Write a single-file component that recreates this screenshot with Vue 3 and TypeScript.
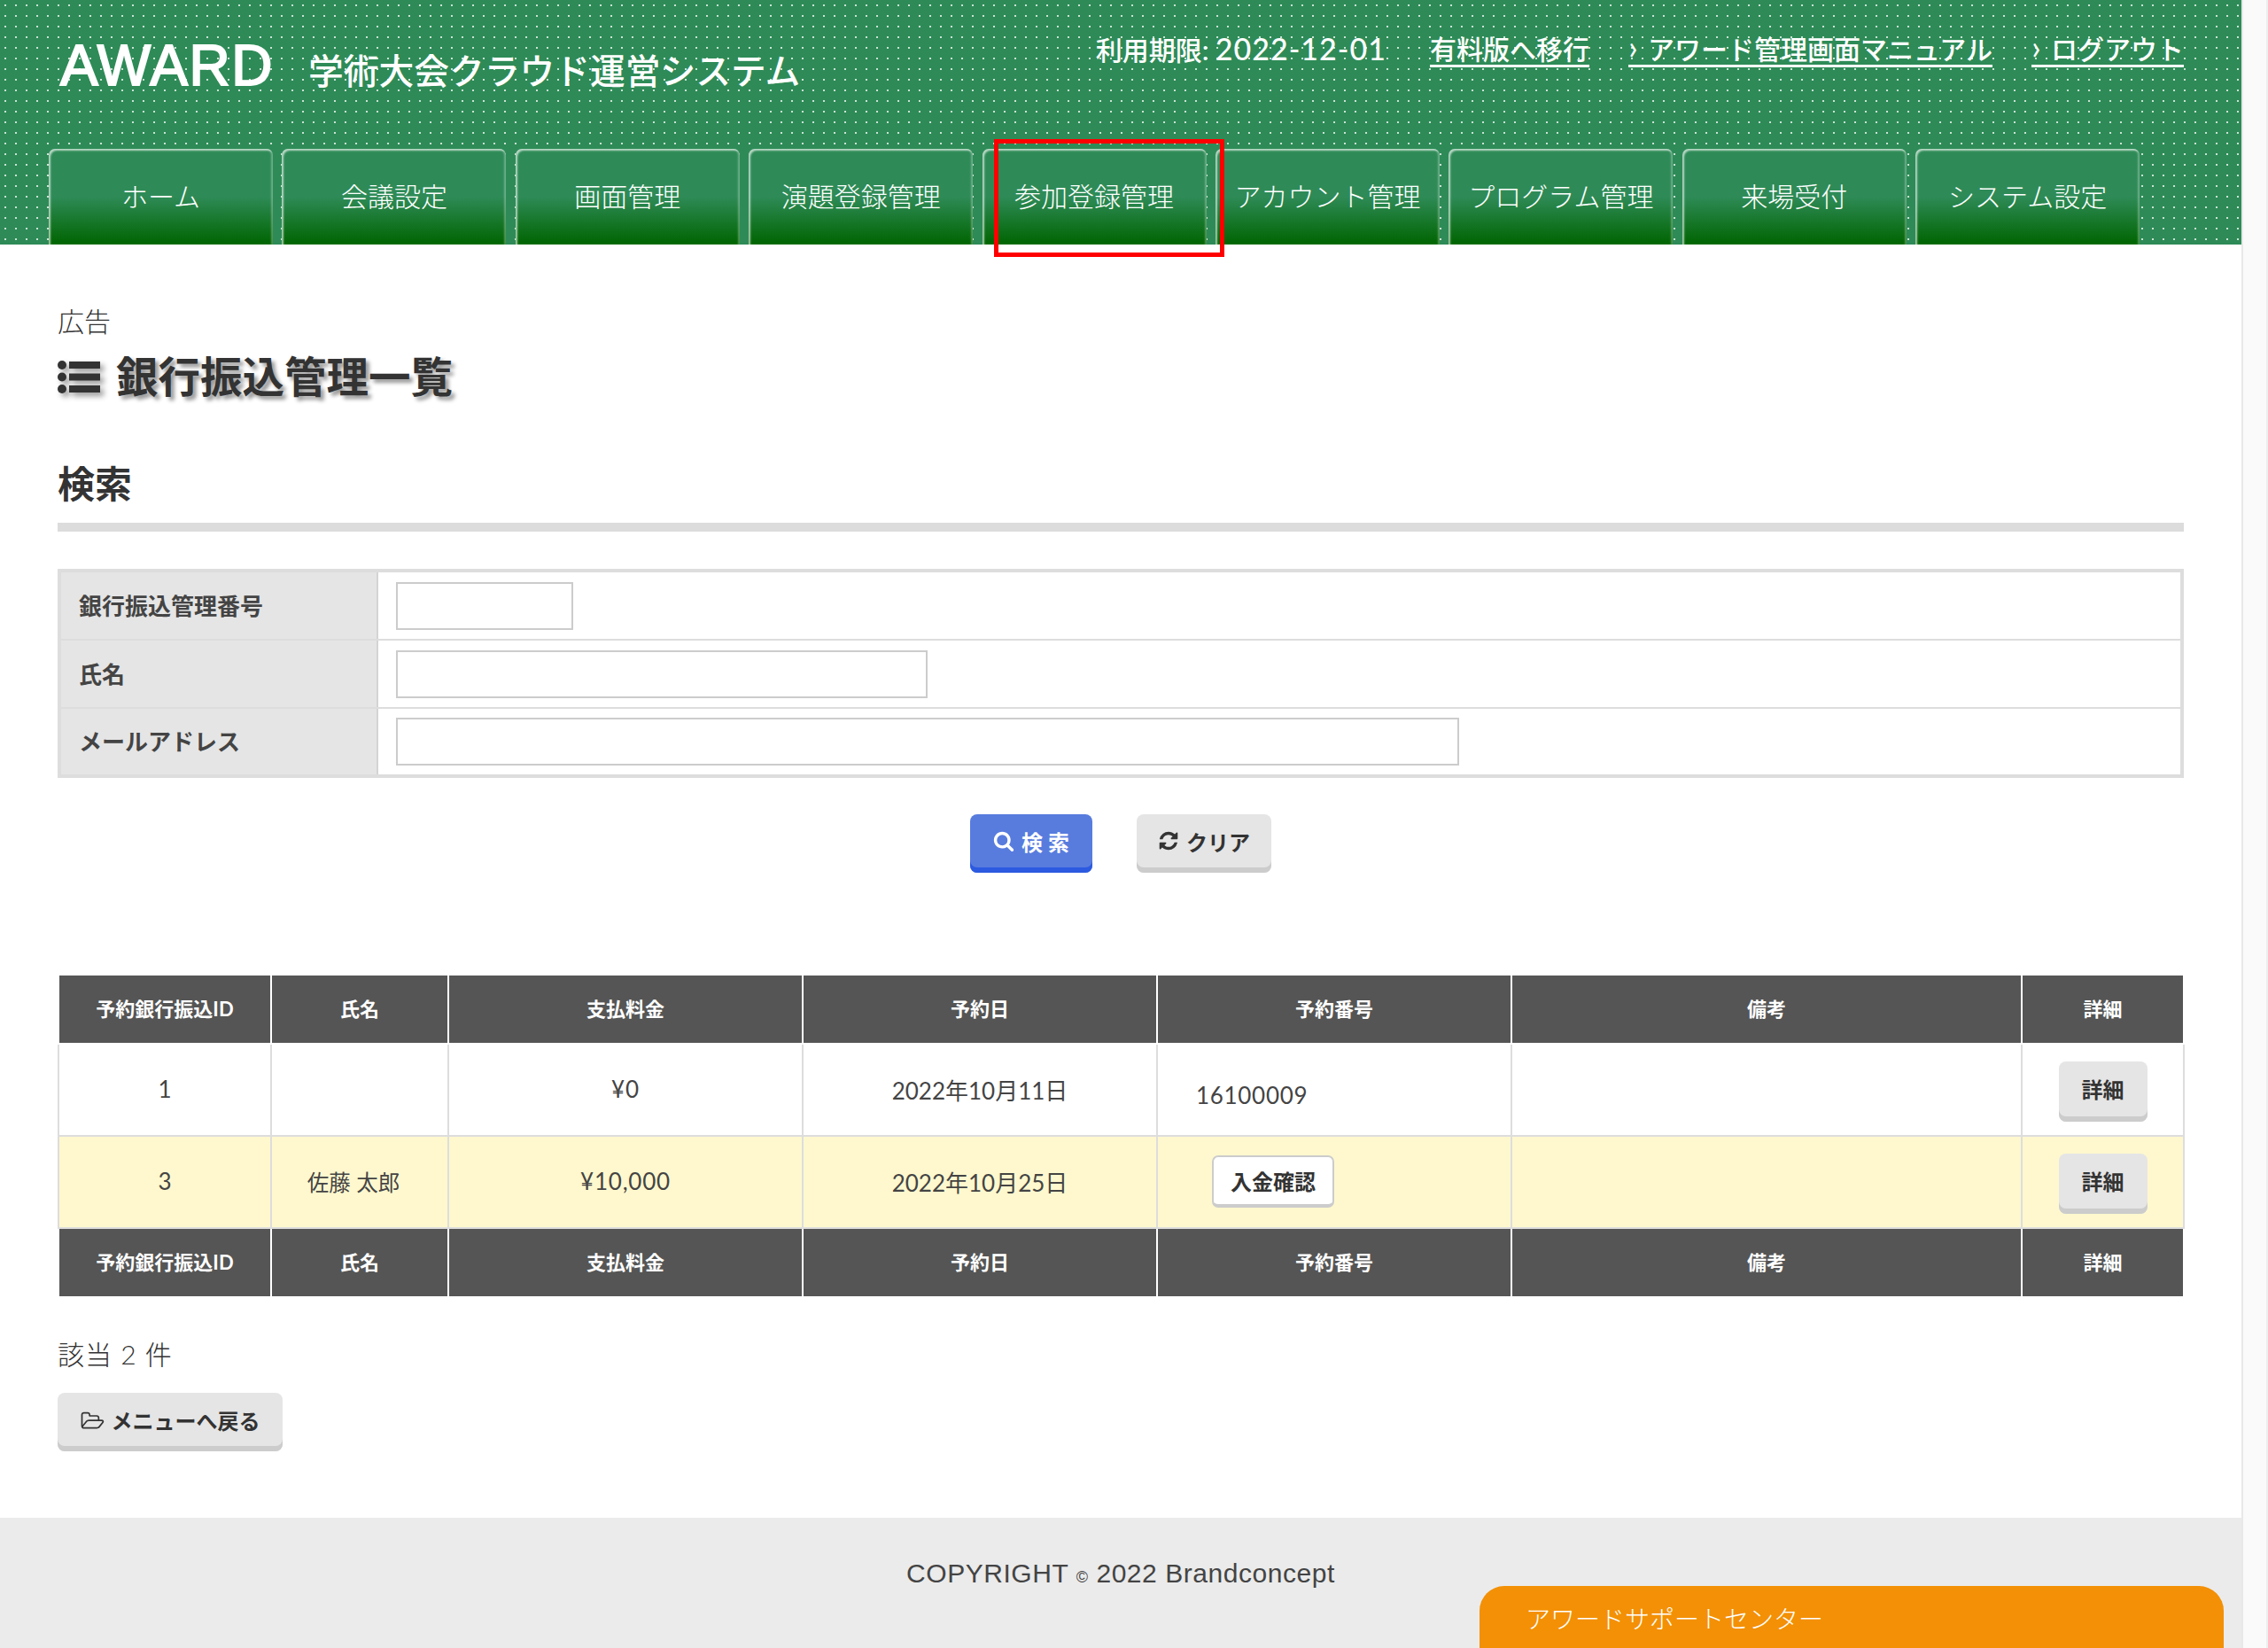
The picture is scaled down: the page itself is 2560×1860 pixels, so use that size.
<script setup lang="ts">
interface PaymentRow {
  id: number
  name: string
  amount: string
  date: string
  number: string
  highlight: boolean
}

const navItems: string[] = [
  'ホーム',
  '会議設定',
  '画面管理',
  '演題登録管理',
  '参加登録管理',
  'アカウント管理',
  'プログラム管理',
  '来場受付',
  'システム設定'
]

const columns: string[] = ['予約銀行振込ID', '氏名', '支払料金', '予約日', '予約番号', '備考', '詳細']
const colWidths: number[] = [240, 200, 400, 400, 400, 576, 183]

const rows: PaymentRow[] = [
  { id: 1, name: '', amount: '¥0', date: '2022年10月11日', number: '16100009', highlight: false },
  { id: 3, name: '佐藤 太郎', amount: '¥10,000', date: '2022年10月25日', number: '', highlight: true }
]
</script>

<template>
  <div class="page">
    <div class="main">
      <header class="header">
        <div class="head-top">
          <div class="brand">
            <span class="logo">AWARD</span>
            <span class="system-name">学術大会クラウド運営システム</span>
          </div>
          <div class="head-links">
            <span class="expire">利用期限: <span class="expire-date">2022-12-01</span></span>
            <a class="head-link">有料版へ移行</a>
            <a class="head-link"><span class="chevron">›</span>アワード管理画面マニュアル</a>
            <a class="head-link"><span class="chevron">›</span>ログアウト</a>
          </div>
        </div>
        <nav class="nav">
          <a v-for="item in navItems" :key="item" class="nav-item">{{ item }}</a>
        </nav>
      </header>

      <main class="content">
        <p class="crumb">広告</p>
        <h1 class="page-title">
          <svg class="list-icon" viewBox="0 0 48 37" aria-hidden="true">
            <circle cx="5" cy="5" r="5" />
            <circle cx="5" cy="18.500" r="5" />
            <circle cx="5" cy="32" r="5" />
            <rect x="13" y="1" width="35" height="8" />
            <rect x="13" y="14.500" width="35" height="8" />
            <rect x="13" y="28" width="35" height="8" />
          </svg>
          銀行振込管理一覧
        </h1>

        <h2 class="section-title">検索</h2>

        <div class="search-form">
          <div class="form-row">
            <label class="form-label">銀行振込管理番号</label>
            <div class="form-field"><input class="input input-s" type="text" /></div>
          </div>
          <div class="form-row">
            <label class="form-label">氏名</label>
            <div class="form-field"><input class="input input-m" type="text" /></div>
          </div>
          <div class="form-row">
            <label class="form-label">メールアドレス</label>
            <div class="form-field"><input class="input input-l" type="text" /></div>
          </div>
        </div>

        <div class="form-actions">
          <button class="btn btn-primary" type="button">
            <svg class="btn-icon" viewBox="0 0 1792 1792" aria-hidden="true">
              <path d="M1216 832q0-185-131.500-316.500t-316.500-131.500-316.500 131.500-131.500 316.500 131.500 316.500 316.500 131.500 316.500-131.500 131.500-316.500zm512 832q0 52-38 90t-90 38q-54 0-90-38l-343-342q-179 124-399 124-143 0-273.500-55.500t-225-150-150-225-55.500-273.500 55.500-273.500 150-225 225-150 273.500-55.500 273.500 55.500 225 150 150 225 55.500 273.500q0 220-124 399l343 343q37 37 37 90z" />
            </svg>
            検 索
          </button>
          <button class="btn" type="button">
            <svg class="btn-icon" viewBox="0 0 1792 1792" aria-hidden="true">
              <path d="M1639 1056q0 5-1 7-64 268-268 434.500t-478 166.500q-146 0-282.500-55t-243.500-157l-129 129q-19 19-45 19t-45-19-19-45v-448q0-26 19-45t45-19h448q26 0 45 19t19 45-19 45l-137 137q71 66 161 102t187 36q134 0 250-65t186-179q11-17 53-117 8-23 30-23h192q13 0 22.500 9.500t9.500 22.500zm25-800v448q0 26-19 45t-45 19h-448q-26 0-45-19t-19-45 19-45l138-138q-148-137-349-137-134 0-250 65t-186 179q-11 17-53 117-8 23-30 23h-199q-13 0-22.500-9.500t-9.500-22.500v-7q65-268 270-434.500t480-166.500q146 0 284 55.500t245 156.500l130-129q19-19 45-19t45 19 19 45z" />
            </svg>
            クリア
          </button>
        </div>

        <table class="result-table">
          <colgroup>
            <col v-for="(w, i) in colWidths" :key="i" :style="{ width: `${w}px` }" />
          </colgroup>
          <thead>
            <tr>
              <th v-for="col in columns" :key="col">{{ col }}</th>
            </tr>
          </thead>
          <tbody>
            <tr v-for="row in rows" :key="row.id" :class="{ highlight: row.highlight }">
              <td>{{ row.id }}</td>
              <td class="name-cell">{{ row.name }}</td>
              <td class="amount-cell">{{ row.amount }}</td>
              <td>{{ row.date }}</td>
              <td class="number-cell">
                <span v-if="row.number" class="reserve-number">{{ row.number }}</span>
                <button v-else class="confirm-btn" type="button">入金確認</button>
              </td>
              <td></td>
              <td class="action-cell"><button class="btn detail-btn" type="button">詳細</button></td>
            </tr>
          </tbody>
          <tfoot>
            <tr>
              <th v-for="col in columns" :key="col">{{ col }}</th>
            </tr>
          </tfoot>
        </table>

        <p class="count">該当 2 件</p>

        <button class="btn back-btn" type="button">
          <svg class="btn-icon folder-icon" viewBox="0 0 1920 1792" aria-hidden="true">
            <path d="M1781 931q0-35-53-35h-1088q-40 0-85.500 21.500t-71.500 52.500l-294 363q-18 24-18 40 0 35 53 35h1088q40 0 86-22t71-53l294-363q18-22 18-39zm-1141-163h768v-160q0-40-28-68t-68-28h-576q-40 0-68-28t-28-68v-64q0-40-28-68t-68-28h-320q-40 0-68 28t-28 68v853l256-315q44-53 116-87.500t140-34.500zm1269 163q0 62-46 120l-295 363q-43 53-116 87.500t-140 34.500h-1088q-92 0-158-66t-66-158v-960q0-92 66-158t158-66h320q92 0 158 66t66 158v32h544q92 0 158 66t66 158v160h192q54 0 99 24.500t67 70.500q15 32 15 68z" />
          </svg>
          メニューへ戻る
        </button>
      </main>

      <footer class="footer">
        <p class="copyright">COPYRIGHT <small>©</small> 2022 Brandconcept</p>
      </footer>
    </div>
    <div class="scroll-track"></div>

    <div class="highlight-box"></div>
    <div class="support-tab">アワードサポートセンター</div>
  </div>
</template>

<style>
html,
body {
  margin: 0;
  background: #fff;
}
</style>

<style scoped>
.page {
  position: relative;
  display: flex;
  width: 2560px;
  height: 1860px;
  overflow: hidden;
  font-family: Lato, "Noto Sans CJK JP", sans-serif;
  color: #333;
}

.main {
  display: flex;
  flex-direction: column;
  width: 2530px;
}

.scroll-track {
  flex: 1;
  background: #fafafa;
  border-left: 2px solid #e8e8e8;
  border-right: 2px solid #eee;
}

.header {
  height: 276px;
  background-color: #2e8b57;
  background-image: radial-gradient(circle, rgba(255, 255, 255, 0.75) 1px, transparent 1.5px);
  background-size: 12px 12px;
}

.head-top {
  display: flex;
  justify-content: space-between;
  height: 168px;
  padding: 0 65px;
  box-sizing: border-box;
  color: #fff;
}

.brand {
  display: flex;
  align-items: baseline;
  gap: 39px;
  margin-top: 34px;
  height: 80px;
}

.logo {
  font-family: "Liberation Sans", sans-serif;
  font-size: 64px;
  line-height: 80px;
  letter-spacing: 1.5px;
  -webkit-text-stroke: 2px #fff;
  margin-left: 3px;
}

.system-name {
  position: relative;
  top: -1px;
  font-size: 39.750px;
  font-weight: 500;
  line-height: 80px;
}

.head-links {
  display: flex;
  align-items: flex-start;
  gap: 44px;
  margin-top: 37px;
  font-size: 30px;
  font-weight: 500;
  line-height: 36px;
}

.expire {
  margin-right: 5px;
}

.expire-date {
  font-size: 34px;
  letter-spacing: 1px;
}

.head-link {
  border-bottom: 3px solid #fff;
  white-space: nowrap;
}

.chevron {
  display: inline-block;
  width: 22px;
  font-size: 38px;
  line-height: 30px;
  font-weight: 400;
}

.nav {
  display: flex;
  gap: 10.400px;
  padding-left: 55px;
}

.nav-item {
  display: flex;
  align-items: center;
  justify-content: center;
  box-sizing: border-box;
  width: 253px;
  height: 108px;
  padding-bottom: 4px;
  border-radius: 7px 7px 0 0;
  background: linear-gradient(to bottom, #2e8b57 0%, #2e8b57 50%, #006400 100%);
  box-shadow: inset 2px 2px 2px rgba(255, 255, 255, 0.65), inset -2px 0 2px rgba(255, 255, 255, 0.3);
  color: #fff;
  font-size: 30px;
  font-weight: 300;
}

.content {
  flex: 1;
  padding: 0 65px;
  box-sizing: border-box;
}

.crumb {
  margin: 67px 0 0;
  font-size: 30px;
  line-height: 38px;
  font-weight: 300;
}

.page-title {
  display: flex;
  align-items: center;
  gap: 18px;
  margin: 14px 0 0;
  font-size: 47.500px;
  line-height: 60px;
  font-weight: 700;
  text-shadow: 4px 4px 4px #999;
}

.list-icon {
  width: 48px;
  height: 37px;
  fill: #333;
  filter: drop-shadow(4px 4px 3px #999);
}

.section-title {
  margin: 66px 0 0;
  padding-bottom: 19px;
  border-bottom: 10px solid #dcdcdc;
  font-size: 42px;
  line-height: 50px;
  font-weight: 700;
}

.search-form {
  display: flex;
  flex-direction: column;
  margin-top: 42px;
  border: 4px solid #ddd;
  box-sizing: border-box;
  height: 236px;
}

.form-row {
  display: flex;
  flex: none;
  height: 75px;
  border-bottom: 2px solid #ddd;
}

.form-row:last-child {
  height: 74px;
  border-bottom: 0;
}

.form-label {
  display: flex;
  align-items: center;
  box-sizing: border-box;
  width: 358px;
  padding: 0 0 3px 20px;
  background: #e5e5e5;
  border-right: 2px solid #d4d4d4;
  font-size: 26px;
  font-weight: 700;
  color: #444;
}

.form-field {
  display: flex;
  align-items: center;
  padding-left: 20px;
}

.input {
  box-sizing: border-box;
  height: 54px;
  border: 2px solid #ccc;
  background: #fff;
  padding: 0 8px;
}

.input-s {
  width: 200px;
}

.input-m {
  width: 600px;
}

.input-l {
  width: 1200px;
}

.form-actions {
  display: flex;
  justify-content: center;
  gap: 50px;
  margin-top: 41px;
}

.btn {
  display: inline-flex;
  align-items: center;
  justify-content: center;
  gap: 8px;
  box-sizing: border-box;
  height: 66px;
  padding: 0 24px 6px;
  border: 0;
  border-radius: 8px;
  background: #e5e5e5;
  box-shadow: inset 0 -6px 0 #ccc;
  color: #333;
  font-family: inherit;
  font-size: 24px;
  font-weight: 700;
}

.btn-primary {
  width: 138px;
  background: #587cde;
  box-shadow: inset 0 -6px 0 #2c5ae0;
  color: #fff;
}

.btn-icon {
  width: 24px;
  height: 24px;
  fill: currentColor;
  flex: none;
}

.result-table {
  width: 2399px;
  margin-top: 114px;
  border-collapse: collapse;
  table-layout: fixed;
}

.result-table th {
  height: 71px;
  padding: 0 0 5px;
  background: #555;
  border: 2px solid #fff;
  color: #fff;
  font-size: 22px;
  font-weight: 700;
}

.result-table td {
  height: 100px;
  padding: 0 0 2px;
  border: 2px solid #ddd;
  text-align: center;
  font-size: 26px;
  font-weight: 400;
  color: #444;
}

.result-table tr.highlight td {
  background: #fff8ce;
}

.result-table td.name-cell {
  padding-right: 14px;
  font-size: 24.500px;
}

.result-table td.amount-cell {
  letter-spacing: 0.800px;
}

.result-table td.number-cell {
  text-align: left;
}

.reserve-number {
  display: block;
  padding: 14px 0 0 43px;
  letter-spacing: 0.700px;
}

.confirm-btn {
  display: block;
  box-sizing: border-box;
  width: 138px;
  height: 59px;
  margin-left: 61px;
  border: 2px solid #ccc;
  border-bottom-width: 4px;
  border-radius: 7px;
  background: #fff;
  color: #333;
  font-family: inherit;
  font-size: 24px;
  font-weight: 700;
}

.detail-btn {
  display: flex;
  width: 100px;
  height: 68px;
  margin: 5px auto 0;
  padding: 0 0 6px;
}

.count {
  margin: 43px 0 0;
  font-size: 30px;
  line-height: 40px;
  font-weight: 300;
  letter-spacing: 1px;
}

.back-btn {
  width: 254px;
  margin-top: 24px;
  padding: 0 0 6px;
}

.folder-icon {
  width: 27px;
  margin-top: 3px;
}

.footer {
  height: 147px;
  background: #ebebeb;
}

.copyright {
  margin: 0;
  padding-top: 43px;
  font-family: "Liberation Sans", sans-serif;
  font-size: 30px;
  line-height: 40px;
  letter-spacing: 0.550px;
  text-align: center;
  color: #444;
}

.copyright small {
  font-size: 18px;
}

.highlight-box {
  position: absolute;
  left: 1122px;
  top: 157px;
  width: 260px;
  height: 133px;
  box-sizing: border-box;
  border: 5px solid #f00;
}

.support-tab {
  position: absolute;
  left: 1670px;
  top: 1790px;
  width: 840px;
  height: 70px;
  box-sizing: border-box;
  padding: 18px 52px 0;
  border-radius: 28px 28px 0 0;
  background: #f39005;
  color: #fff;
  font-size: 28px;
  line-height: 38px;
  font-weight: 300;
}
</style>
